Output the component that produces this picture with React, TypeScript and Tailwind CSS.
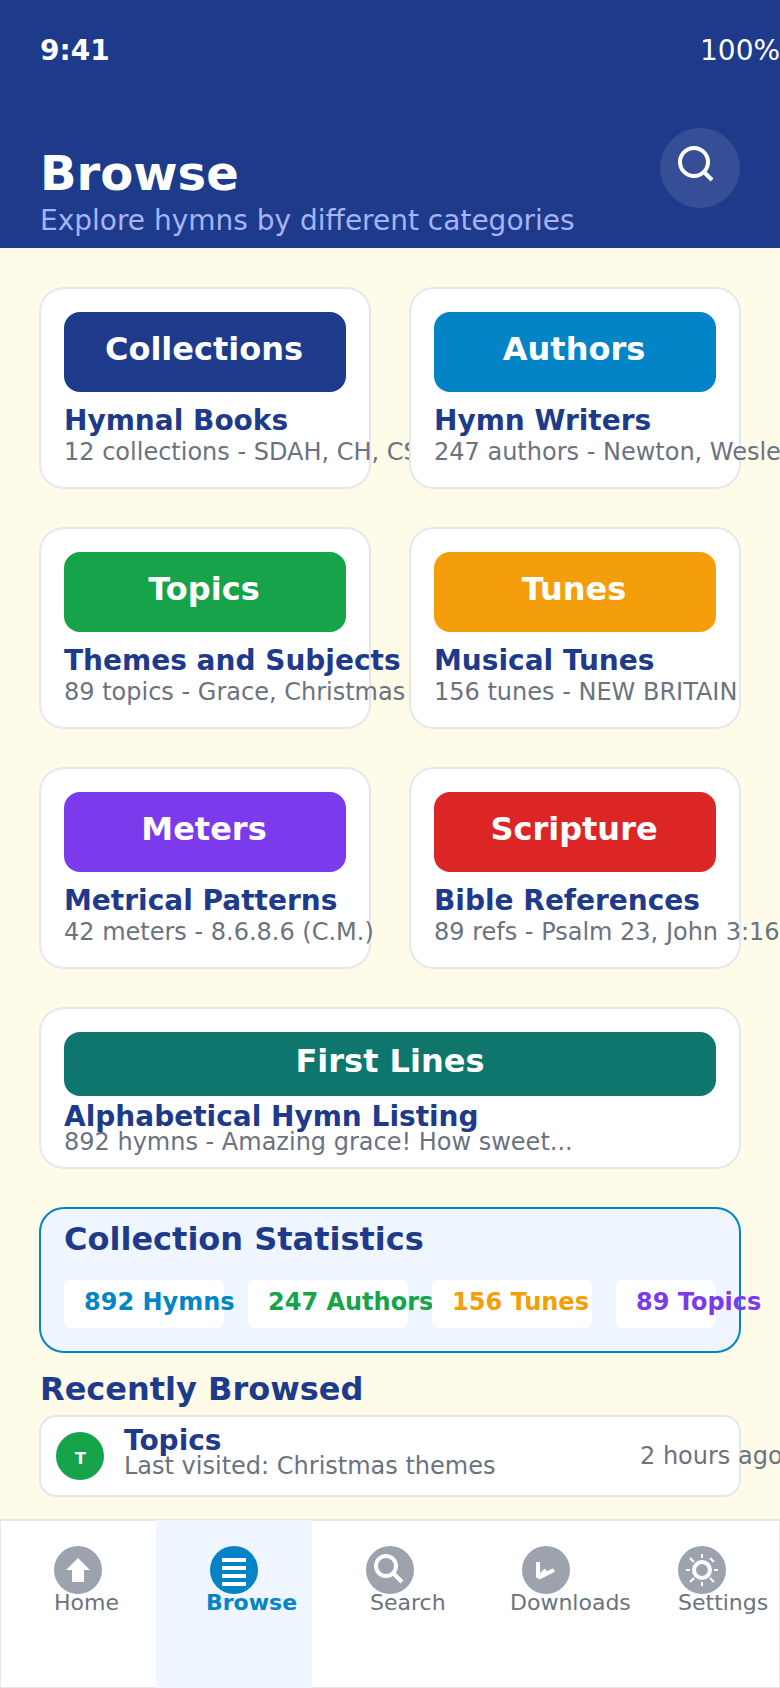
import type { ReactNode } from "react";

type Category = { label: string; color: string; title: string; detail: string };

const categories: Category[] = [
  { label: "Collections", color: "bg-[#1e3a8a]", title: "Hymnal Books", detail: "12 collections - SDAH, CH, CS" },
  { label: "Authors", color: "bg-[#0284c7]", title: "Hymn Writers", detail: "247 authors - Newton, Wesley" },
  { label: "Topics", color: "bg-[#16a34a]", title: "Themes and Subjects", detail: "89 topics - Grace, Christmas" },
  { label: "Tunes", color: "bg-[#f59e0b]", title: "Musical Tunes", detail: "156 tunes - NEW BRITAIN" },
  { label: "Meters", color: "bg-[#7c3aed]", title: "Metrical Patterns", detail: "42 meters - 8.6.8.6 (C.M.)" },
  { label: "Scripture", color: "bg-[#dc2626]", title: "Bible References", detail: "89 refs - Psalm 23, John 3:16" },
];

const stats = [
  { text: "892 Hymns", style: "w-[160px] text-[#0284c7]" },
  { text: "247 Authors", style: "w-[160px] text-[#16a34a]" },
  { text: "156 Tunes", style: "w-[160px] text-[#f59e0b]" },
  { text: "89 Topics", style: "w-[100px] text-[#7c3aed]" },
];

function CategoryCard({ label, color, title, detail }: Category) {
  return (
    <article className="h-[202px] w-[332px] rounded-[25px] border-2 border-[#e5e7eb] bg-white px-[23px] pt-[23px]">
      <div className={`flex h-20 justify-center rounded-2xl pt-[18px] pr-0.5 text-[32px] leading-[38px] font-bold text-white ${color}`}>
        {label}
      </div>
      <h2 className="mt-3 text-[28px] leading-[33px] font-bold text-[#1e3a8a]">{title}</h2>
      <p className="mt-px text-2xl leading-[28px] text-[#6b7280]">{detail}</p>
    </article>
  );
}

function NavItem({ label, active, indent, children }: { label: string; active?: boolean; indent: string; children: ReactNode }) {
  return (
    <a className={`flex w-[156px] flex-col pt-[26px] ${active ? "bg-[#eff6ff]" : ""}`}>
      <svg className="ml-[54px] size-12 shrink-0" viewBox="0 0 48 48" fill="none" stroke="white">
        <circle cx="24" cy="24" r="24" stroke="none" fill={active ? "#0284c7" : "#9ca3af"} />
        {children}
      </svg>
      <span className={`-mt-1 text-[22px] leading-[25px] ${indent} ${active ? "font-bold text-[#0284c7]" : "text-[#6b7280]"}`}>
        {label}
      </span>
    </a>
  );
}

export default function App() {
  return (
    <div className="flex h-[1688px] w-[780px] flex-col overflow-hidden bg-[#fefbe8] font-['DejaVu_Sans',sans-serif] whitespace-nowrap">
      <header className="h-[248px] shrink-0 bg-[#1e3a8a] pt-[34px] pl-10 text-white">
        <div className="flex justify-between text-[28px] leading-[33px]">
          <span className="font-bold">9:41</span>
          <span className="w-20">100%</span>
        </div>
        <div className="mt-[61px] flex justify-between pr-10">
          <div className="pt-[17px]">
            <h1 className="text-5xl leading-[56px] font-bold">Browse</h1>
            <p className="mt-[3px] text-[28px] leading-[33px] text-[#a5b4fc]">Explore hymns by different categories</p>
          </div>
          <button className="size-20 rounded-full bg-white/10" aria-label="Search">
            <svg className="size-20" viewBox="0 0 80 80" fill="none" stroke="white" strokeWidth="4">
              <circle cx="34" cy="34" r="14" />
              <path d="M44 44l8 8" />
            </svg>
          </button>
        </div>
      </header>

      <main className="flex h-[1271px] shrink-0 flex-col px-[39px] pt-[39px]">
        <section className="grid grid-cols-[332px_332px] gap-[38px]">
          {categories.map((category) => (
            <CategoryCard key={category.label} {...category} />
          ))}
        </section>

        <article className="mt-[38px] h-[162px] rounded-[25px] border-2 border-[#e5e7eb] bg-white px-[23px] pt-[23px]">
          <div className="flex h-16 justify-center rounded-2xl bg-[#0f766e] pt-2.5 text-[32px] leading-[38px] font-bold text-white">
            First Lines
          </div>
          <h2 className="mt-1 text-[28px] leading-[33px] font-bold text-[#1e3a8a]">Alphabetical Hymn Listing</h2>
          <p className="-mt-[5px] text-2xl leading-[28px] text-[#6b7280]">892 hymns - Amazing grace! How sweet...</p>
        </article>

        <section className="mt-[38px] h-[146px] rounded-[25px] border-2 border-[#0284c7] bg-[#eff6ff] px-[23px] pt-[11px]">
          <h2 className="text-[32px] leading-[38px] font-bold text-[#1e3a8a]">Collection Statistics</h2>
          <div className="mt-[22px] flex gap-6">
            {stats.map((stat) => (
              <div key={stat.text} className={`h-12 shrink-0 rounded-lg bg-white pt-2 pl-5 text-2xl leading-[28px] font-bold ${stat.style}`}>
                {stat.text}
              </div>
            ))}
          </div>
        </section>

        <h2 className="mt-[17px] pl-px text-[32px] leading-[38px] font-bold text-[#1e3a8a]">Recently Browsed</h2>
        <article className="mt-[7px] flex h-[82px] shrink-0 rounded-[17px] border-2 border-[#e5e7eb] bg-white pl-[15px]">
          <div className="mt-[15px] flex size-12 shrink-0 justify-center rounded-full bg-[#16a34a] pt-[17px] pl-px text-base leading-[19px] font-bold text-white">
            T
          </div>
          <div className="ml-5 w-[516px] shrink-0 pt-[7px]">
            <h3 className="text-[28px] leading-[33px] font-bold text-[#1e3a8a]">Topics</h3>
            <p className="-mt-[5px] text-2xl leading-[28px] text-[#6b7280]">Last visited: Christmas themes</p>
          </div>
          <span className="pt-[25px] text-2xl leading-[28px] text-[#6b7280]">2 hours ago</span>
        </article>
      </main>

      <nav className="relative flex h-[169px] shrink-0 bg-white pt-px before:absolute before:inset-0 before:border before:border-t-2 before:border-[#e5e7eb]">
        <div className="relative flex">
          <NavItem label="Home" indent="pl-[54px]">
            <path d="M24 12l12 12h-6v12H18V24h-6z" fill="white" stroke="none" />
          </NavItem>
          <NavItem label="Browse" indent="pl-[50px]" active>
            <path d="M12 14h24M12 22h24M12 30h24M12 38h24" strokeWidth="4" />
          </NavItem>
          <NavItem label="Search" indent="pl-[58px]">
            <circle cx="20" cy="20" r="10" strokeWidth="4" />
            <path d="M28 28l8 8" strokeWidth="4" />
          </NavItem>
          <NavItem label="Downloads" indent="pl-[42px]">
            <path d="M16 16v16M16 32l16-8M16 32l8-8" strokeWidth="4" />
          </NavItem>
          <NavItem label="Settings" indent="pl-[54px]">
            <circle cx="24" cy="24" r="8" strokeWidth="4" />
            <path d="M24 8v4M24 36v4M8 24h4M36 24h4M12 12l4 4M32 32l4 4M12 36l4-4M32 12l4 4" strokeWidth="2" />
          </NavItem>
        </div>
      </nav>
    </div>
  );
}
